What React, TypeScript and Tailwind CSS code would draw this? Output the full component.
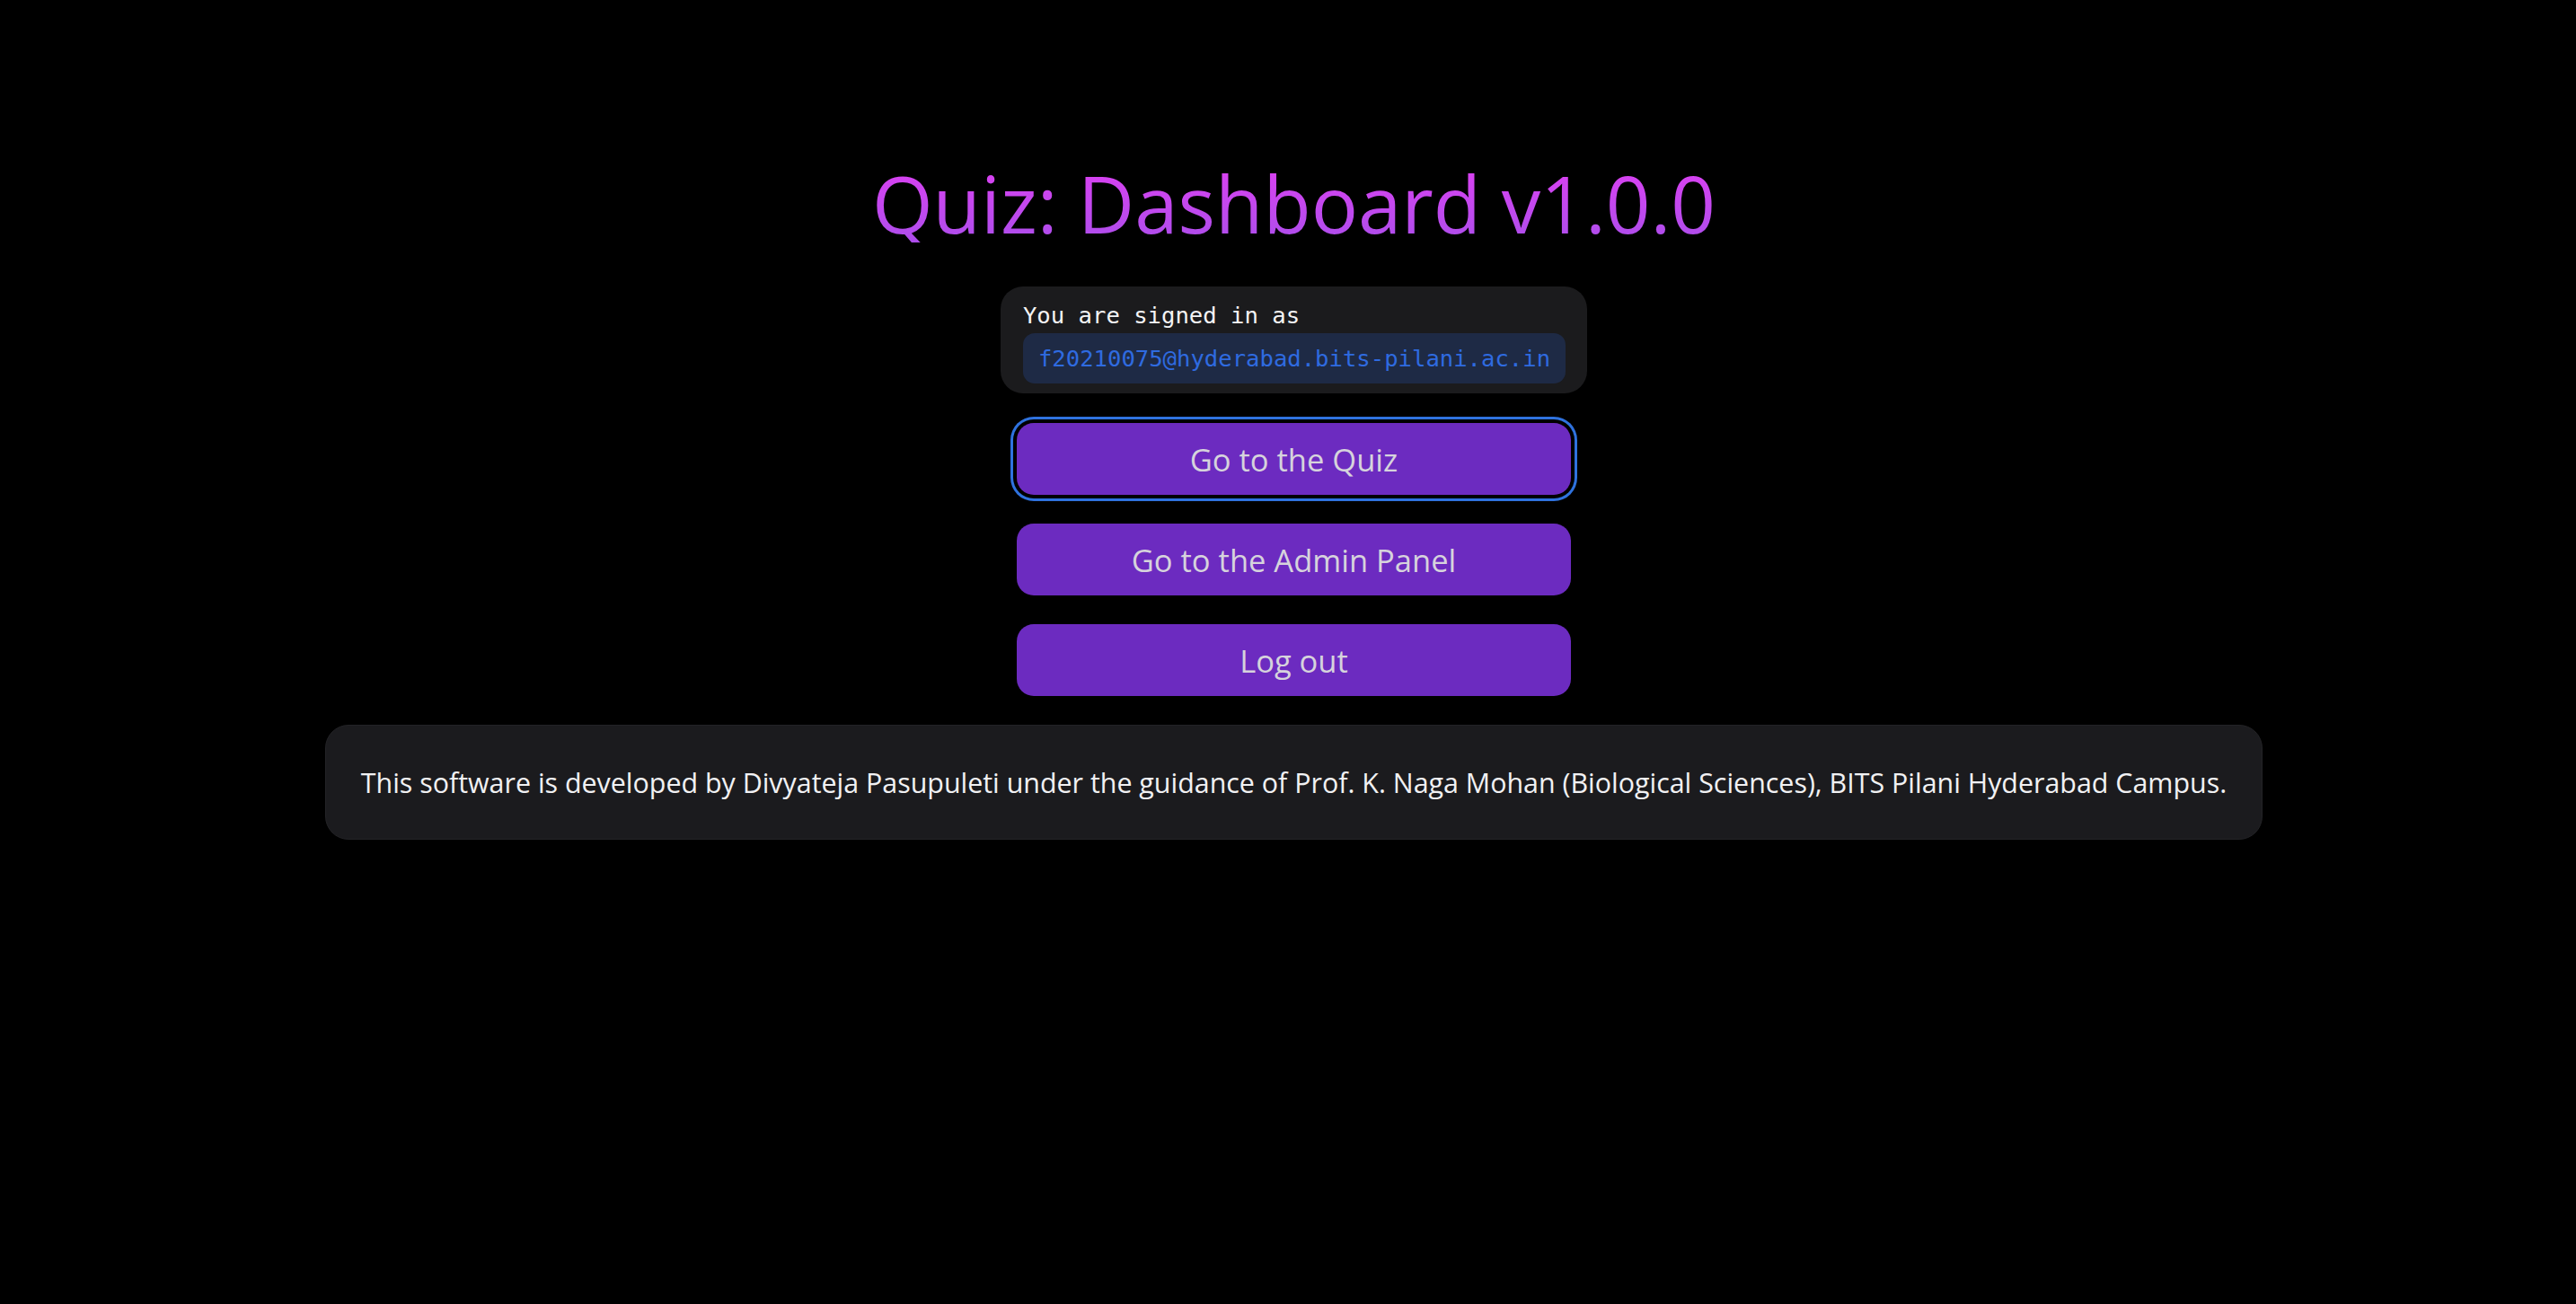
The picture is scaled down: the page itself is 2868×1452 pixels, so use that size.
import React from "react";

const sans = { fontFamily: '"Open Sans", "Noto Sans", sans-serif' };

export default function App() {
  return (
    <div className="min-h-screen w-full bg-black" style={sans}>
      <main className="flex flex-col items-center pl-[13px] pt-[183px]">
        {/* Title */}
        <h1 className="bg-linear-to-b from-[#dc3ff2] to-[#ad4deb] bg-clip-text text-[87px] leading-[87px] text-transparent">
          Quiz: Dashboard v1.0.0
        </h1>

        {/* Signed in card */}
        <div className="mt-[49px] rounded-[25px] bg-[#1b1b1d] pl-[25px] pr-[24px] pt-[13px] pb-[11px] font-['DejaVu_Sans_Mono',monospace] text-[25.6px]">
          <div className="h-[39px] leading-[39px] text-[#f4f4f5]">You are signed in as</div>
          <div className="flex h-[56px] items-center rounded-[13px] bg-[#1e2a45] px-[17px] text-[#2f6be0]">
            f20210075@hyderabad.bits-pilani.ac.in
          </div>
        </div>

        {/* Actions */}
        <div className="mt-[33px] flex flex-col gap-[32px]">
          <ActionButton label="Go to the Quiz" focused />
          <ActionButton label="Go to the Admin Panel" />
          <ActionButton label="Log out" />
        </div>

        {/* Footer note */}
        <div className="mt-[32px] flex h-[128px] w-[2157px] items-center justify-center rounded-[26px] border border-[#232326] bg-[#1b1b1e] pt-[2px] text-[30.4px] text-[#f1f1f3]">
          This software is developed by Divyateja Pasupuleti under the guidance of Prof. K. Naga Mohan (Biological Sciences), BITS Pilani Hyderabad Campus.
        </div>
      </main>
    </div>
  );
}

function ActionButton({ label, focused }: { label: string; focused?: boolean }) {
  return (
    <button
      className={
        focused
          ? "h-[80px] w-[617px] rounded-[19px] bg-[#6c2bc0] pt-[2px] text-[34.5px] text-[#d6d3dc] ring-[3px] ring-[#2f72de] ring-offset-[4px] ring-offset-black"
          : "h-[80px] w-[617px] rounded-[19px] bg-[#6c2bc0] pt-[2px] text-[34.5px] text-[#d6d3dc]"
      }
    >
      {label}
    </button>
  );
}
